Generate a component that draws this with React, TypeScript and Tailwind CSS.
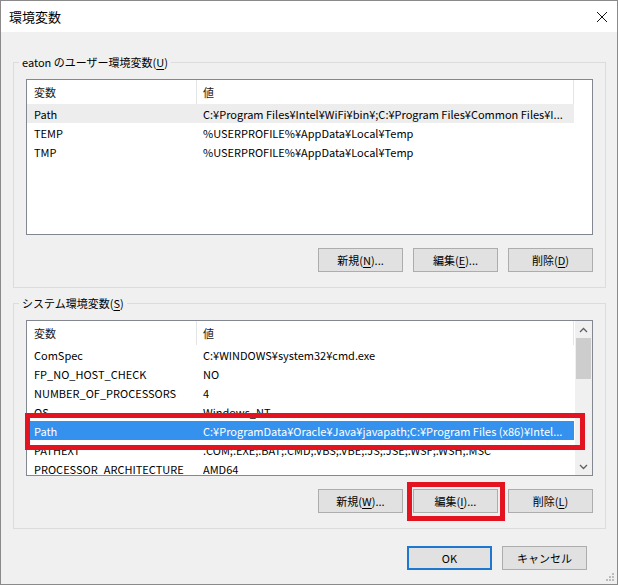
import type { ReactNode } from 'react';

type Row = [string, string];

const userVars: Row[] = [
  ['Path', 'C:¥Program Files¥Intel¥WiFi¥bin¥;C:¥Program Files¥Common Files¥I...'],
  ['TEMP', '%USERPROFILE%¥AppData¥Local¥Temp'],
  ['TMP', '%USERPROFILE%¥AppData¥Local¥Temp'],
];

const systemVars: Row[] = [
  ['ComSpec', 'C:¥WINDOWS¥system32¥cmd.exe'],
  ['FP_NO_HOST_CHECK', 'NO'],
  ['NUMBER_OF_PROCESSORS', '4'],
  ['OS', 'Windows_NT'],
  ['Path', 'C:¥ProgramData¥Oracle¥Java¥javapath;C:¥Program Files (x86)¥Intel...'],
  ['PATHEXT', '.COM;.EXE;.BAT;.CMD;.VBS;.VBE;.JS;.JSE;.WSF;.WSH;.MSC'],
  ['PROCESSOR_ARCHITECTURE', 'AMD64'],
];

const font = { fontFamily: '"Noto Sans CJK JP", "Noto Sans", sans-serif' };

const Mnemonic = ({ label, hotkey, tail = '' }: { label: string; hotkey: string; tail?: string }) => (
  <>
    {label}(<span className="underline underline-offset-2">{hotkey}</span>){tail}
  </>
);

const Button = ({ children, primary }: { children: ReactNode; primary?: boolean }) => (
  <button
    type="button"
    className={
      primary
        ? 'flex h-[24px] w-[85px] items-center justify-center border-2 border-[#1f78d0] bg-[#e1e1e1] text-[11px] leading-[16px] text-black'
        : 'flex h-[24px] w-[85px] items-center justify-center border border-[#adadad] bg-[#e1e1e1] text-[11px] leading-[16px] text-black'
    }
  >
    {children}
  </button>
);

const Chevron = ({ up }: { up?: boolean }) => (
  <svg width="9" height="6" viewBox="0 0 9 6">
    <path
      d={up ? 'M1 5 L4.5 1.5 L8 5' : 'M1 1 L4.5 4.5 L8 1'}
      fill="none"
      stroke="#606060"
      strokeWidth="1.3"
    />
  </svg>
);

const Scrollbar = () => (
  <div className="flex w-[17px] shrink-0 flex-col bg-[#f0f0f0]">
    <div className="flex h-[17px] items-center justify-center">
      <Chevron up />
    </div>
    <div className="mx-auto h-[41px] w-[15px] bg-[#cdcdcd]" />
    <div className="flex-1" />
    <div className="flex h-[17px] items-center justify-center">
      <Chevron />
    </div>
  </div>
);

interface VarListProps {
  rows: Row[];
  hoverIndex?: number;
  selectedIndex?: number;
  scrollbar?: boolean;
  children?: ReactNode;
}

const VarList = ({ rows, hoverIndex, selectedIndex, scrollbar, children }: VarListProps) => (
  <div className="relative h-[156px] w-[567px] border border-[#828790] bg-white">
    <div className="flex h-full overflow-hidden">
      <div className="min-w-0 flex-1">
        <div className="flex h-[24px] text-[11px] leading-[16px] text-[#1a1a1a]">
          <div className="flex w-[170px] items-center border-r border-[#e5e5e5] pl-[7px]">変数</div>
          <div className="flex w-[377px] items-center border-r border-[#e5e5e5] pl-[6px]">値</div>
        </div>
        {rows.map(([name, value], idx) => {
          const selected = idx === selectedIndex;
          const hovered = idx === hoverIndex;
          return (
            <div
              key={name + idx}
              className={
                selected
                  ? 'flex h-[19px] w-[547px] items-center bg-[#3591ee] text-[11px] leading-[16px] text-white'
                  : hovered
                    ? 'flex h-[19px] w-[547px] items-center bg-[#ededed] text-[11px] leading-[16px] text-black'
                    : 'flex h-[19px] w-[547px] items-center text-[11px] leading-[16px] text-black'
              }
            >
              <div className="w-[170px] overflow-hidden whitespace-nowrap pl-[7px]">{name}</div>
              <div className="w-[377px] overflow-hidden whitespace-nowrap pl-[6px]">{value}</div>
            </div>
          );
        })}
      </div>
      {scrollbar && <Scrollbar />}
    </div>
    {children}
  </div>
);

const Group = ({ legend, children }: { legend: ReactNode; children: ReactNode }) => (
  <fieldset className="ml-[12px] w-[592px] border border-[#dcdcdc] px-[12px] pb-[15px]">
    <legend className="ml-[-7px] px-[3px] text-[11px] leading-[16px] text-black">{legend}</legend>
    {children}
  </fieldset>
);

export default function App() {
  return (
    <div
      className="flex h-[585px] w-[618px] flex-col overflow-hidden border border-[#8a8a8a] bg-[#f0f0f0]"
      style={font}
    >
      {/* title bar */}
      <div className="flex h-[31px] shrink-0 items-center justify-between bg-white pl-[8px] pr-[9px]">
        <span className="text-[13px] leading-[16px] text-black">環境変数</span>
        <svg width="12" height="12" viewBox="0 0 12 12">
          <path d="M1 1 L11 11 M11 1 L1 11" stroke="#111" strokeWidth="1" />
        </svg>
      </div>

      <div className="relative flex flex-1 flex-col pt-[22px]">
        <Group legend={<>eaton のユーザー環境変数(<span className="underline underline-offset-2">U</span>)</>}>
          <div className="mt-[9px]">
            <VarList rows={userVars} hoverIndex={0} />
          </div>
          <div className="mt-[13px] flex justify-end gap-[10px]">
            <Button><Mnemonic label="新規" hotkey="N" tail="..." /></Button>
            <Button><Mnemonic label="編集" hotkey="E" tail="..." /></Button>
            <Button><Mnemonic label="削除" hotkey="D" /></Button>
          </div>
        </Group>

        <div className="mt-[7px]">
          <Group legend={<>システム環境変数(<span className="underline underline-offset-2">S</span>)</>}>
            <div className="mt-[9px]">
              <VarList rows={systemVars} selectedIndex={4} scrollbar>
                {/* highlight around the selected Path row */}
                <div className="pointer-events-none absolute left-[-2px] top-[92px] h-[37px] w-[560px] border-[5px] border-[#e3141f]" />
              </VarList>
            </div>
            <div className="mt-[13px] flex justify-end gap-[10px]">
              <Button><Mnemonic label="新規" hotkey="W" tail="..." /></Button>
              <div className="relative">
                <Button><Mnemonic label="編集" hotkey="I" tail="..." /></Button>
                <div className="pointer-events-none absolute left-[-6px] top-[-7px] h-[39px] w-[98px] border-[5px] border-[#e3141f]" />
              </div>
              <Button><Mnemonic label="削除" hotkey="L" /></Button>
            </div>
          </Group>
        </div>

        <div className="mt-[17px] flex justify-end gap-[10px] pr-[30px]">
          <Button primary>OK</Button>
          <Button>キャンセル</Button>
        </div>

        {/* size grip */}
        <svg className="absolute bottom-[2px] right-[2px]" width="10" height="10" viewBox="0 0 10 10">
          {[
            [8, 2],
            [5, 5],
            [8, 5],
            [2, 8],
            [5, 8],
            [8, 8],
          ].map(([cx, cy]) => (
            <rect key={`${cx}-${cy}`} x={cx - 1} y={cy - 1} width="2" height="2" fill="#bcbcbc" />
          ))}
        </svg>
      </div>
    </div>
  );
}
